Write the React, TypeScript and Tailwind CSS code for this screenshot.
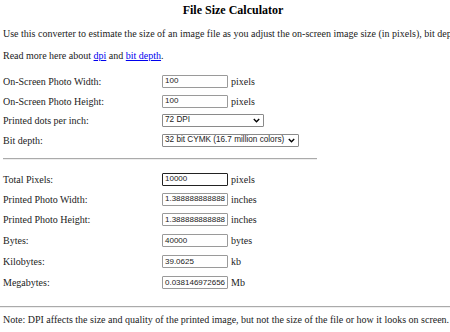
import React from "react";

const serif = { fontFamily: '"Liberation Serif", "Times New Roman", serif' };
const sans = { fontFamily: '"Liberation Sans", Arial, sans-serif' };

function Chevron() {
  return (
    <svg width="7" height="5" viewBox="0 0 7 5" className="shrink-0">
      <path d="M0.8 1 L3.5 3.7 L6.2 1" fill="none" stroke="#000" strokeWidth="1.4" />
    </svg>
  );
}

function Field({ value, dark }: { value: string; dark?: boolean }) {
  return (
    <div
      className={`flex h-[13px] w-[66px] items-center overflow-hidden whitespace-nowrap rounded-[1px] border pl-[2px] text-[8px] text-[#222] ${
        dark ? "border-[#222]" : "border-[#9a9a9a]"
      }`}
      style={sans}
    >
      {value}
    </div>
  );
}

function Select({ value, width }: { value: string; width: string }) {
  return (
    <div
      className={`flex h-[13px] ${width} items-center justify-between rounded-[1px] border border-[#8a8a8a] pl-[2px] pr-[3px] text-[8.2px] text-[#222]`}
      style={sans}
    >
      <span className="whitespace-nowrap">{value}</span>
      <Chevron />
    </div>
  );
}

function Row({
  label,
  children,
  unit,
  h,
}: {
  label: string;
  children: React.ReactNode;
  unit?: string;
  h: string;
}) {
  return (
    <div className={`flex ${h} items-center`}>
      <div className="w-[159px] shrink-0">{label}</div>
      {children}
      {unit && <span className="ml-[3px]">{unit}</span>}
    </div>
  );
}

export default function App() {
  return (
    <div className="h-[332px] w-[450px] overflow-hidden bg-white text-[10px] text-[#222]" style={serif}>
      <div className="w-[466px]">
        <h1 className="pt-[3px] text-center text-[12px] font-bold leading-[15px] text-black">File Size Calculator</h1>
        <p className="mt-[10px] whitespace-nowrap pl-[3px] leading-[12px]">
          Use this converter to estimate the size of an image file as you adjust the on-screen image size (in pixels), bit depth, and dpi.
        </p>
        <p className="mt-[10px] pl-[3px] leading-[12px]">
          Read more here about{" "}
          <a className="text-[#00e] underline">dpi</a> and{" "}
          <a className="text-[#00e] underline">bit depth</a>.
        </p>
        <div className="mt-[9px] w-[314px] pl-[3px]">
          <Row label="On-Screen Photo Width:" unit="pixels" h="h-[20px]">
            <Field value="100" />
          </Row>
          <Row label="On-Screen Photo Height:" unit="pixels" h="h-[20px]">
            <Field value="100" />
          </Row>
          <Row label="Printed dots per inch:" h="h-[19px]">
            <Select value="72 DPI" width="w-[102px]" />
          </Row>
          <Row label="Bit depth:" h="h-[20px]">
            <Select value="32 bit CYMK (16.7 million colors)" width="w-[137px]" />
          </Row>
        </div>
        <div className="ml-[3px] mt-[8px] h-[2px] w-[314px] border-t border-[#aaa] bg-[#eee]" />
        <div className="mt-[9px] pl-[3px]">
          <Row label="Total Pixels:" unit="pixels" h="h-[20px]">
            <Field value="10000" dark />
          </Row>
          <Row label="Printed Photo Width:" unit="inches" h="h-[20px]">
            <Field value="1.388888888888" />
          </Row>
          <Row label="Printed Photo Height:" unit="inches" h="h-[21px]">
            <Field value="1.388888888888" />
          </Row>
          <Row label="Bytes:" unit="bytes" h="h-[21px]">
            <Field value="40000" />
          </Row>
          <Row label="Kilobytes:" unit="kb" h="h-[21px]">
            <Field value="39.0625" />
          </Row>
          <Row label="Megabytes:" unit="Mb" h="h-[21px]">
            <Field value="0.038146972656" />
          </Row>
        </div>
        <div className="mt-[13px] h-[2px] w-full border-t border-[#aaa] bg-[#eee]" />
        <p className="mt-[6px] whitespace-nowrap pl-[3px] leading-[12px]">
          Note: DPI affects the size and quality of the printed image, but not the size of the file or how it looks on screen.
        </p>
      </div>
    </div>
  );
}
